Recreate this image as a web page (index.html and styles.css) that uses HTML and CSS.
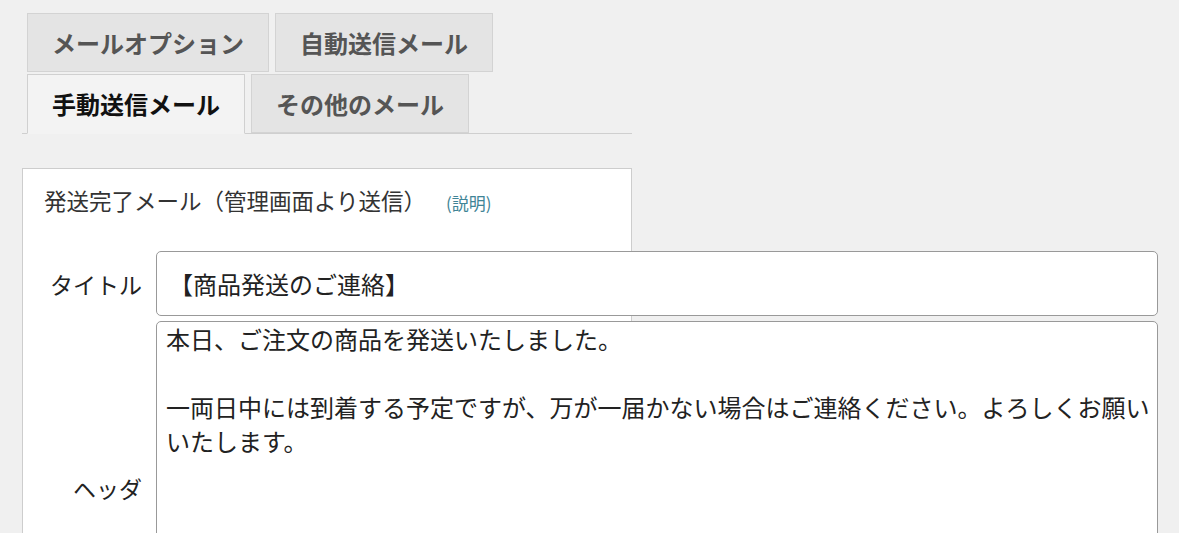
FILE: index.html
```html
<!DOCTYPE html>
<html lang="ja">
<head>
  <meta charset="UTF-8">
  <title>メール設定</title>
  <link rel="stylesheet" href="styles.css">
</head>
<body>
  <div class="tabs">
    <div class="tab">メールオプション</div>
    <div class="tab">自動送信メール</div>
    <div class="tab active">手動送信メール</div>
    <div class="tab">その他のメール</div>
  </div>

  <div class="mail-box">
    <h3>発送完了メール（管理画面より送信）<a href="#" class="help">(説明)</a></h3>

    <div class="row">
      <label for="title">タイトル</label>
      <input type="text" id="title" value="【商品発送のご連絡】">
    </div>
    <div class="row">
      <label for="header">ヘッダ</label>
      <textarea id="header">本日、ご注文の商品を発送いたしました。

一両日中には到着する予定ですが、万が一届かない場合はご連絡ください。よろしくお願いいたします。</textarea>
    </div>
  </div>
</body>
</html>
```

FILE: styles.css
```css
body { margin: 0; padding: 13px 0 0 22px; background: #f0f0f0; font-family: "Noto Sans CJK JP", "Noto Sans", sans-serif; color: #222; }
.tabs { display: flex; flex-wrap: wrap; align-items: flex-end; column-gap: 6px; row-gap: 2px; width: 610px; box-sizing: border-box; padding-left: 5px; border-bottom: 1px solid #cfcfcf; }
.tab { height: 59px; box-sizing: border-box; padding: 0 24px; line-height: 57px; font-size: 24px; font-weight: bold; color: #555; background: #e4e4e4; border: 1px solid #d3d3d3; }
.tab.active { height: 60px; margin-bottom: -1px; color: #111; background: #f3f3f3; border-color: #d0d0d0; border-bottom-color: #f3f3f3; }
.mail-box { width: 610px; box-sizing: border-box; margin-top: 34px; padding: 16px 0 0 0; background: #fff; border: 1px solid #cdcdcd; height: 400px; }
.mail-box h3 { margin: 0 0 33px 21px; font-size: 22.5px; line-height: 30px; font-weight: normal; color: #333; }
.help { margin-left: 20px; font-size: 17px; color: #3f8496; text-decoration: none; }
.row { display: grid; grid-template-columns: 119px 1002px; column-gap: 14px; align-items: center; margin-bottom: 5px; }
.row label { text-align: right; font-size: 23px; line-height: 30px; color: #222; }
.row input, .row textarea { box-sizing: border-box; width: 1002px; font-family: inherit; font-size: 24px; color: #222; background: #fff; border: 1px solid #999; border-radius: 5px; }
.row input { height: 65px; padding: 0 10px 0 12px; }
.row textarea { height: 334px; padding: 0 3px 0 9px; line-height: 34px; resize: none; overflow: hidden; }
```
